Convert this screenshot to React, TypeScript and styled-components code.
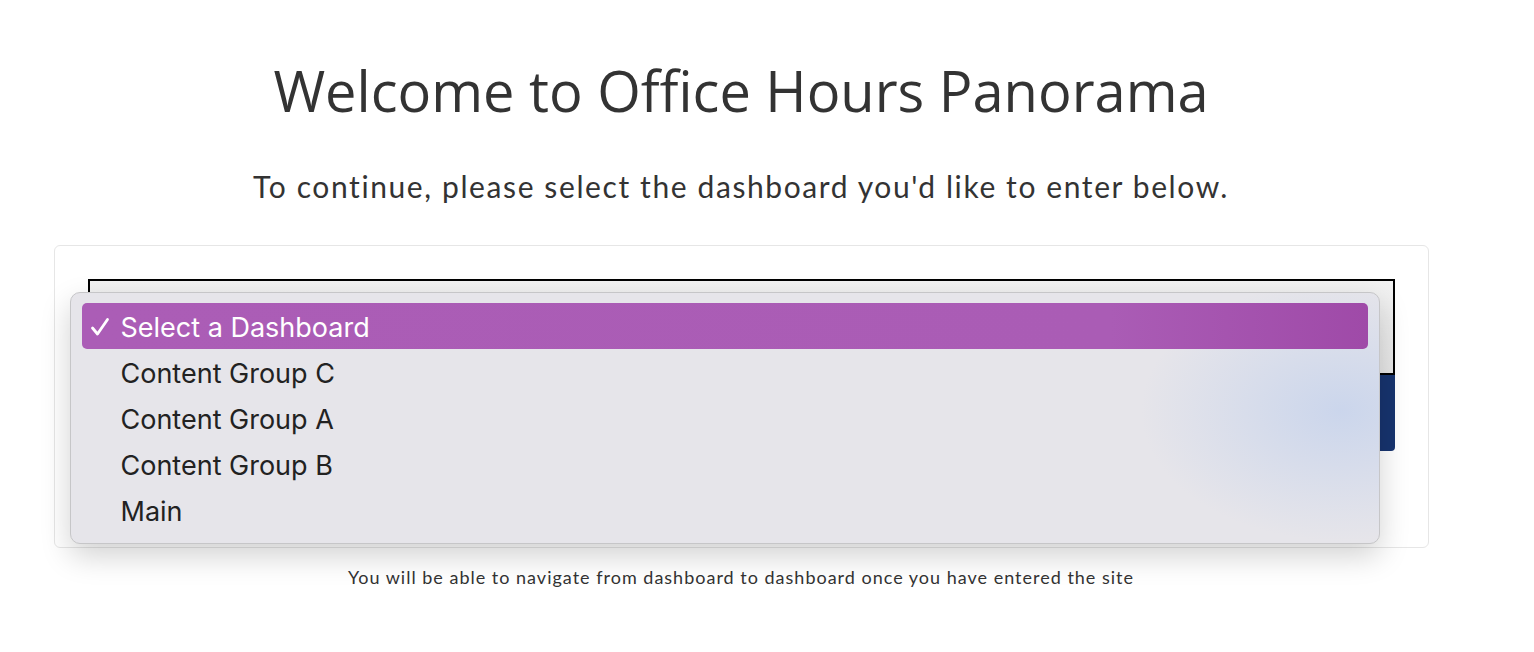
import React from 'react'
import styled, { createGlobalStyle } from 'styled-components'

const GlobalStyle = createGlobalStyle`
  html, body {
    margin: 0;
    padding: 0;
    background: #ffffff;
  }
  body {
    font-family: 'Open Sans', 'Liberation Sans', sans-serif;
    color: #333333;
  }
`

const Page = styled.div`
  width: 1534px;
  height: 652px;
  box-sizing: border-box;
  padding-top: 51px;
  display: flex;
  flex-direction: column;
  align-items: center;
`

const Title = styled.h1`
  margin: 0 0 0 -52px;
  font-family: 'Open Sans', sans-serif;
  font-weight: 400;
  font-size: 56px;
  line-height: 78px;
  color: #333333;
`

const Subtitle = styled.p`
  margin: 37px 0 0 -52px;
  font-family: Lato, 'Open Sans', sans-serif;
  font-weight: 400;
  font-size: 30px;
  letter-spacing: 1.6px;
  line-height: 40px;
  color: #333333;
`

const Card = styled.div`
  position: relative;
  margin-top: 39px;
  margin-right: 52px;
  width: 1375px;
  height: 303px;
  box-sizing: border-box;
  border: 1px solid #e6e6e6;
  border-radius: 6px;
  padding: 33px 33px 0 33px;
  display: flex;
  flex-direction: column;
`

const SelectBox = styled.div`
  height: 96px;
  box-sizing: border-box;
  border: 2px solid #000000;
  background: linear-gradient(#f2f2f2, #e6e6e6);
`

const EnterButton = styled.div`
  height: 76px;
  background: #17346f;
  border-radius: 0 0 4px 4px;
`

const Popup = styled.ul`
  position: absolute;
  left: 15px;
  top: 46px;
  width: 1310px;
  height: 252px;
  box-sizing: border-box;
  margin: 0;
  padding: 10px 11px;
  list-style: none;
  border: 1px solid #c6c6c8;
  border-radius: 10px;
  background:
    radial-gradient(ellipse 200px 130px at 1270px 118px, rgba(200, 212, 236, 0.9), rgba(200, 212, 236, 0) 100%),
    #e6e5ea;
  box-shadow: 0 12px 30px rgba(0, 0, 0, 0.18);
  display: flex;
  flex-direction: column;
`

const Option = styled.li<{ $active?: boolean }>`
  height: 46px;
  flex: none;
  display: flex;
  align-items: center;
  border-radius: 5px;
  font-family: Inter, 'Open Sans', sans-serif;
  font-size: 27px;
  padding-top: 2px;
  box-sizing: border-box;
  color: ${p => (p.$active ? '#ffffff' : '#222222')};
  background: ${p =>
    p.$active ? 'linear-gradient(90deg, #ab5db6 0%, #aa5cb5 80%, #9f4aa8 100%)' : 'transparent'};
`

const Check = styled.span`
  width: 39px;
  height: 100%;
  padding-left: 8px;
  box-sizing: border-box;
  display: flex;
  align-items: center;
`

const Footnote = styled.p`
  margin: 18px 0 0 -52px;
  font-family: Lato, 'Open Sans', sans-serif;
  font-size: 18px;
  letter-spacing: 1px;
  color: #333333;
`

const CheckIcon = () => (
  <svg width="20" height="20" viewBox="0 0 20 20">
    <path d="M2.5 11 L7.5 17 L17.5 2.5" fill="none" stroke="#ffffff" strokeWidth="2.8" strokeLinecap="round" strokeLinejoin="round" />
  </svg>
)

const options = ['Select a Dashboard', 'Content Group C', 'Content Group A', 'Content Group B', 'Main']

const App: React.FC = () => {
  return (
    <>
      <GlobalStyle />
      <Page>
        <Title>Welcome to Office Hours Panorama</Title>
        <Subtitle>To continue, please select the dashboard you'd like to enter below.</Subtitle>
        <Card>
          <SelectBox />
          <EnterButton />
          <Popup>
            {options.map((o, i) => (
              <Option key={o} $active={i === 0}>
                <Check>{i === 0 && <CheckIcon />}</Check>
                {o}
              </Option>
            ))}
          </Popup>
        </Card>
        <Footnote>You will be able to navigate from dashboard to dashboard once you have entered the site</Footnote>
      </Page>
    </>
  )
}

export default App
